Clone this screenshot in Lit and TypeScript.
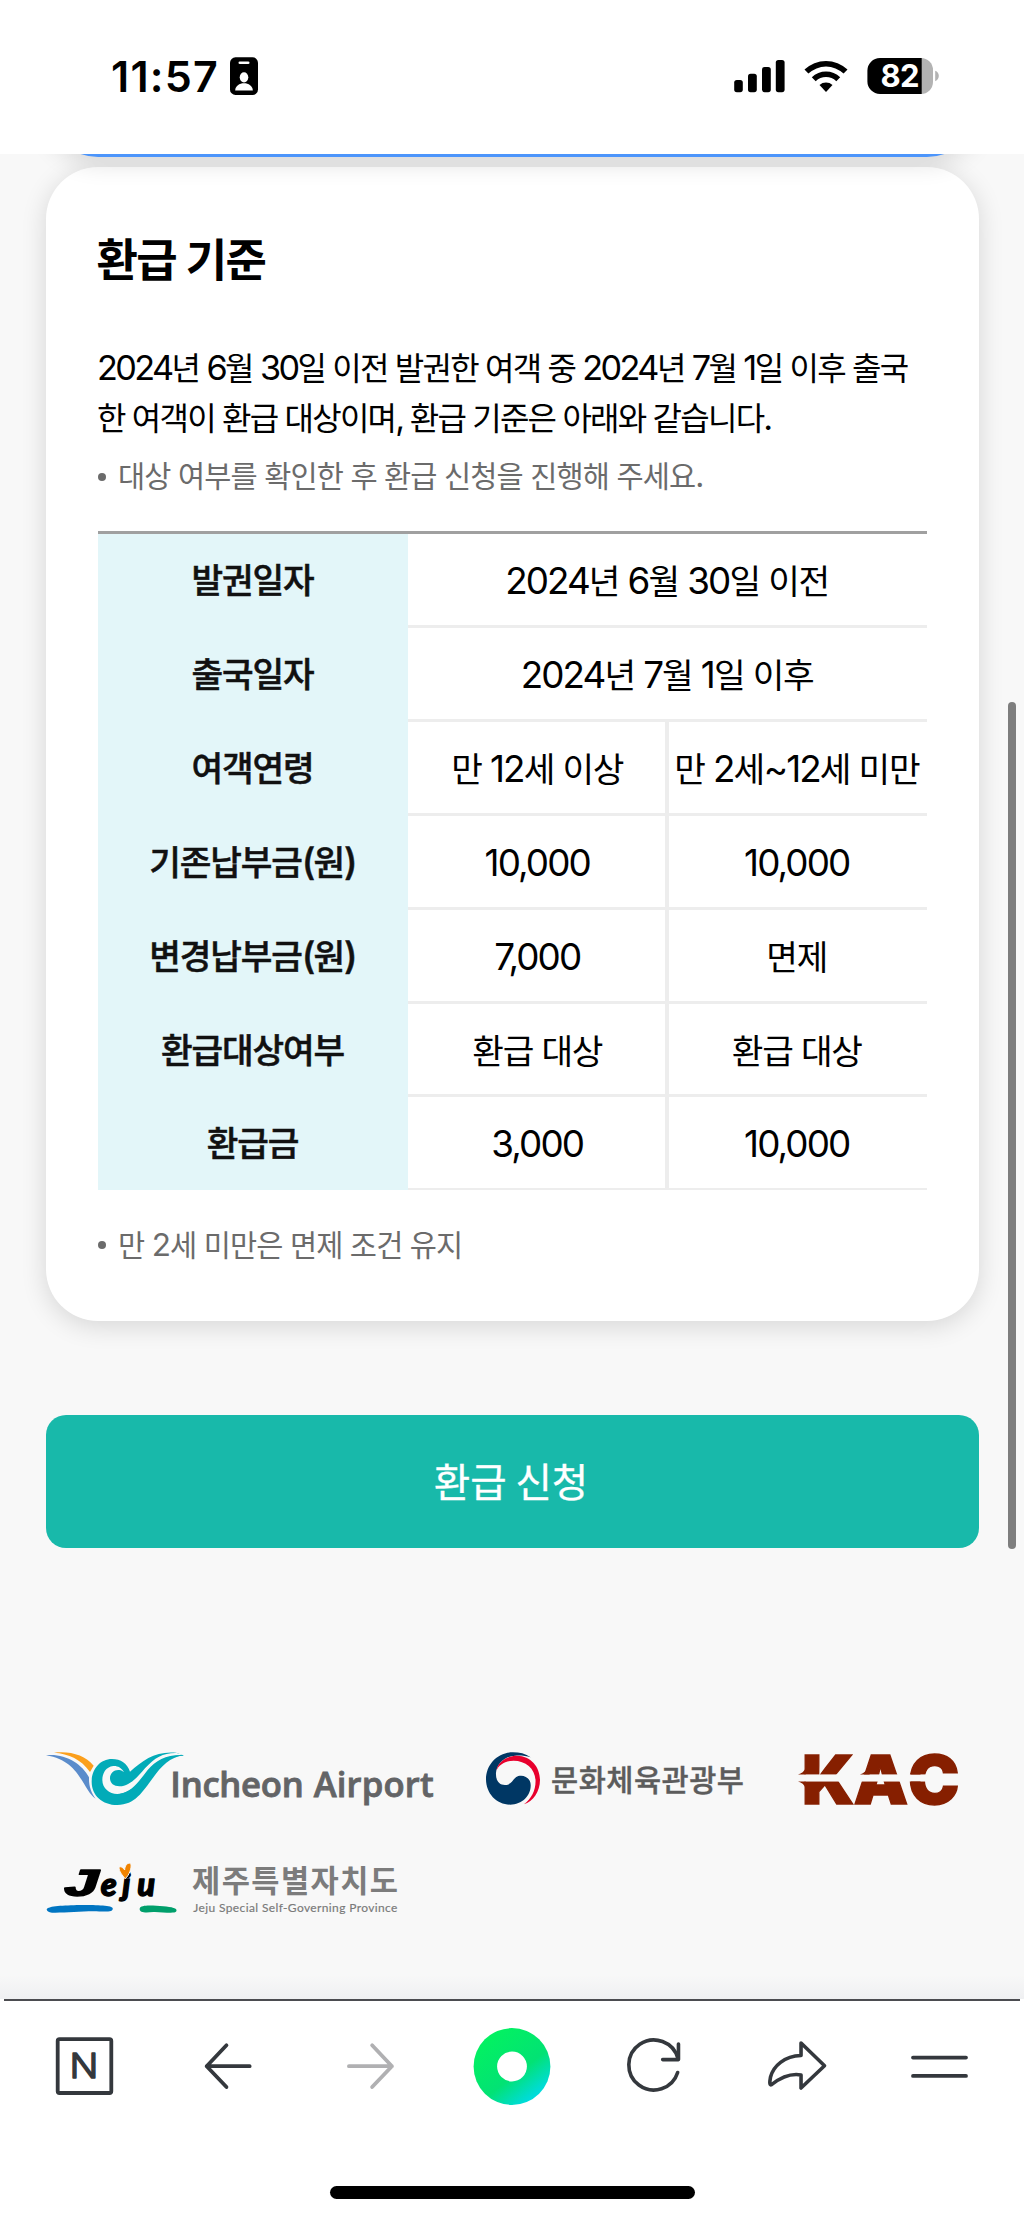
import { LitElement, html, css } from "lit";
import { customElement } from "lit/decorators.js";

/** Wraps Latin and digit runs so that they take the Latin face at its own size. */
const mix = (text: string) =>
  text
    .split(/([0-9A-Za-z,.~()]+)/)
    .filter((part) => part !== "")
    .map((part) => (/^[0-9A-Za-z,.~()]/.test(part) ? html`<span class="n">${part}</span>` : part));

interface Row {
  head: string;
  cells: string[];
}

const ROWS: Row[] = [
  { head: "발권일자", cells: ["2024년 6월 30일 이전"] },
  { head: "출국일자", cells: ["2024년 7월 1일 이후"] },
  { head: "여객연령", cells: ["만 12세 이상", "만 2세~12세 미만"] },
  { head: "기존납부금(원)", cells: ["10,000", "10,000"] },
  { head: "변경납부금(원)", cells: ["7,000", "면제"] },
  { head: "환급대상여부", cells: ["환급 대상", "환급 대상"] },
  { head: "환급금", cells: ["3,000", "10,000"] },
];

@customElement("status-bar")
class StatusBar extends LitElement {
  static styles = css`
    :host {
      display: flex;
      align-items: flex-start;
      height: 154px;
      box-sizing: border-box;
      padding: 57px 85px 0 111px;
      background: #fff;
      font-family: Inter, "Liberation Sans", sans-serif;
    }
    .time {
      width: 119px;
      font-size: 43px;
      line-height: 39px;
      font-weight: 600;
      letter-spacing: 1.2px;
      color: #000;
      white-space: nowrap;
    }
    .badge {
      width: 28px;
      height: 38px;
    }
    .right {
      margin-left: auto;
      display: flex;
      align-items: flex-start;
    }
    .signal {
      width: 51px;
      height: 38px;
      margin-right: 19px;
    }
    .wifi {
      width: 44px;
      height: 38px;
      margin-right: 19px;
    }
    .battery {
      width: 72px;
      height: 38px;
    }
  `;
  render() {
    return html`
      <div class="time">11:57</div>
      <svg class="badge" viewBox="0 0 28 38">
        <rect x="0" y="0.3" width="28" height="37.6" rx="5.5" />
        <rect x="8.5" y="4.4" width="11" height="2.6" rx="1.3" fill="#fff" />
        <ellipse cx="14" cy="20.3" rx="4.3" ry="5.1" fill="#fff" />
        <path d="M5.2 33.5C5.2 29 9.5 26.3 14 26.3S22.8 29 22.8 33.5Z" fill="#fff" />
      </svg>
      <div class="right">
        <svg class="signal" viewBox="0 0 51 38">
          <rect x="0.2" y="23" width="8.6" height="12.2" rx="2.6" />
          <rect x="14" y="16.8" width="8.8" height="18.4" rx="2.6" />
          <rect x="28" y="10" width="8.8" height="25.2" rx="2.6" />
          <rect x="41.8" y="3" width="8.8" height="32.2" rx="2.6" />
        </svg>
        <svg class="wifi" viewBox="0 0 44 38">
          <path d="M0.5 12.6A31 31 0 0 1 43.5 12.6L39.6 16.6A25.5 25.5 0 0 0 4.4 16.6Z" />
          <path d="M7.8 20.2A20.5 20.5 0 0 1 36.2 20.2L32.3 24.2A15 15 0 0 0 11.7 24.2Z" />
          <path d="M15.5 28A9.8 9.8 0 0 1 28.5 28L22 35Z" />
        </svg>
        <svg class="battery" viewBox="0 0 72 38">
          <rect x="40" y="1" width="26" height="36" rx="12" fill="#b3b3b3" />
          <path d="M54.7 1H13A12.6 12.6 0 0 0 0.4 13.6V24.4A12.6 12.6 0 0 0 13 37H54.7Z" />
          <path d="M68.2 13.8C73 15.5 73 22.5 68.2 24.2Z" fill="#b3b3b3" />
          <text x="13.5" y="30.3" font-size="31" font-weight="700" fill="#fff" textLength="39" lengthAdjust="spacing">82</text>
        </svg>
      </div>
    `;
  }
}

@customElement("refund-table")
class RefundTable extends LitElement {
  static styles = css`
    :host {
      display: block;
      border-top: 3px solid #a0a0a0;
      font-size: 34.4px;
      line-height: 50px;
      color: #000;
    }
    .row {
      display: grid;
      grid-template-columns: 310px 1fr;
      height: 93.8px;
    }
    .row.first {
      height: 94.8px;
    }
    .row.last {
      height: 92.2px;
    }
    .head,
    .cell {
      display: flex;
      align-items: center;
      justify-content: center;
      white-space: nowrap;
      box-sizing: border-box;
    }
    .head {
      background: #e3f6f9;
      color: #111;
      font-weight: 500;
      -webkit-text-stroke: 0.5px #111;
      letter-spacing: -1.15px;
      padding: 0 1px 6px 0;
    }
    .cells {
      display: grid;
      grid-template-columns: 1fr;
    }
    .cells.two {
      grid-template-columns: 257.4px 1fr;
    }
    .cell {
      border-bottom: 3.6px solid #ededed;
      padding: 0 1px 1px 0;
      letter-spacing: -1.3px;
      word-spacing: 2px;
    }
    .cells.two .cell:first-child {
      padding: 0 0 1px 1px;
    }
    .row.last .cell {
      border-bottom-width: 2px;
    }
    .cell + .cell {
      border-left: 4px solid #ededed;
      padding-right: 3px;
    }
    .n {
      font-size: 1.07em;
      line-height: 0;
      letter-spacing: -1.9px;
      font-family: Inter, "Noto Sans CJK KR", sans-serif;
    }
  `;
  render() {
    return html`${ROWS.map(
      (row, i) => html`
        <div class="row ${i === 0 ? "first" : i === ROWS.length - 1 ? "last" : ""}">
          <div class="head"><span>${mix(row.head)}</span></div>
          <div class="cells ${row.cells.length > 1 ? "two" : ""}">
            ${row.cells.map((cell) => html`<div class="cell"><span>${mix(cell)}</span></div>`)}
          </div>
        </div>
      `
    )}`;
  }
}

@customElement("partner-logos")
class PartnerLogos extends LitElement {
  static styles = css`
    :host {
      display: flex;
      flex-direction: column;
      gap: 57px;
    }
    .line {
      display: flex;
      align-items: flex-start;
    }
    .incheon {
      width: 388px;
      height: 54px;
      margin-right: 52px;
      overflow: visible;
    }
    .roundel {
      width: 54px;
      height: 53px;
      margin-right: 11px;
    }
    .ministry {
      width: 194px;
      margin-right: 53px;
      line-height: 52px;
      font-size: 29.5px;
      letter-spacing: 0.5px;
      font-weight: 500;
      -webkit-text-stroke: 0.4px #5c5c5c;
      color: #5c5c5c;
      white-space: nowrap;
    }
    .kac {
      width: 161.4px;
      height: 54px;
      overflow: visible;
    }
    .jeju {
      width: 352px;
      height: 54px;
      overflow: visible;
    }
  `;
  render() {
    return html`
      <div class="line">
        <svg class="incheon" viewBox="78 96 1164 162">
          <path
            fill="#02abb8"
            d="M468 98C405 93 370 120 330 155C322 130 302 117 276 117C240 117 215 148 215 185C215 226 247 255 292 255C345 255 368 215 398 175C425 137 450 112 490 106Z"
          />
          <path
            fill="#f8f8f8"
            d="M312 157C305 143 292 137 280 138C257 141 247 160 247 180C247 205 268 222 292 222C335 220 355 190 385 152C410 122 440 106 492 106L470 99C430 98 405 112 375 145C350 175 325 200 298 199C282 199 270 190 270 175C270 158 284 148 298 150C304 151 308 153 312 157Z"
          />
          <path fill="#02abb8" d="M490 105C440 103 408 120 383 150C355 186 335 216 300 221L330 232C365 205 385 160 412 135C440 112 462 109 490 107Z" />
          <path fill="#fb9f1c" d="M102 98C150 92 195 105 221 137L210 156C184 118 146 101 102 98Z" />
          <path
            fill="#5b8ccb"
            d="M78 106C136 100 186 132 207 172C206 198 214 220 227 236C186 208 182 122 78 106Z"
          />
          <g
            font-family="Open Sans, Noto Sans, sans-serif"
            font-size="104"
            font-weight="600"
            fill="#636466"
            stroke="#636466"
            stroke-width="2.5"
          >
            <text x="451" y="231" textLength="400" lengthAdjust="spacing">Incheon</text>
            <text x="881" y="231" textLength="360" lengthAdjust="spacing">Airport</text>
          </g>
        </svg>
        <svg class="roundel" viewBox="75 96 157 159" preserveAspectRatio="none">
          <path
            fill="#003764"
            d="M205 112C190 101 172 97 153 97C110 97 75 132 75 178C75 220 105 254 145 254C180 254 205 228 205 196C205 178 192 167 177 167C152 167 155 195 130 195C112 195 103 180 104 160C106 130 130 108 160 107C178 106 192 108 205 112Z"
          />
          <path
            fill="#e8002d"
            d="M105 152C110 124 138 107 165 107C205 108 232 140 232 180C232 215 212 245 185 253C208 235 220 210 219 180C217 145 190 122 155 122C130 122 112 135 105 152Z"
          />
        </svg>
        <div class="ministry">문화체육관광부</div>
        <svg class="kac" viewBox="982 96 469 159" preserveAspectRatio="none">
          <text
            x="994 1143 1302"
            y="249"
            font-family="Inter, sans-serif"
            font-size="200"
            font-weight="900"
            fill="#861f00"
            stroke="#861f00"
            stroke-width="4"
          >KAC</text>
          <rect x="980" y="162" width="480" height="21" fill="#f8f8f8" />
          <path
            fill="#861f00"
            d="M982 162Q998 158 1004 144V162ZM982 183Q998 187 1004 202V183ZM1162 162Q1180 156 1190 138V162ZM1308 162Q1326 156 1338 138V162ZM1308 183Q1326 190 1338 208V183Z"
          />
        </svg>
      </div>
      <div class="line">
        <svg class="jeju" viewBox="78 432 1056 162">
          <text
            transform="translate(128 530) scale(1.65 1)"
            font-family="Liberation Mono, monospace"
            font-size="118"
            font-weight="700"
            font-style="italic"
            stroke="#000"
            stroke-width="4"
            stroke-linejoin="round"
          >J</text>
          <text
            x="242 307 352"
            y="532"
            font-family="Lato, sans-serif"
            font-size="98"
            font-weight="900"
            font-style="italic"
            stroke="#000"
            stroke-width="4"
            stroke-linejoin="round"
          >eju</text>
          <path
            fill="#f08300"
            stroke="#f8f8f8"
            stroke-width="3"
            d="M316 479C307 470 297 456 297 446C300 440 309 445 314 453C314 440 322 430 332 433C337 446 327 469 316 479Z"
          />
          <path
            fill="#0075c2"
            d="M80 571C86 560 130 560 180 558C220 558 272 558 278 567C281 580 260 578 220 577C180 577 130 582 96 581C86 580 80 576 80 571Z"
          />
          <path fill="#009f6b" d="M359 569C362 556 400 560 430 562C455 564 474 568 469 577C464 586 425 578 400 579C378 581 358 582 359 569Z" />
          <text
            x="516"
            y="520"
            font-family="Noto Sans CJK KR, sans-serif"
            font-size="92"
            font-weight="700"
            fill="#7c7c7c"
            textLength="618"
            lengthAdjust="spacing"
          >제주특별자치도</text>
          <text
            x="520"
            y="579"
            font-family="Lato, sans-serif"
            font-size="36"
            font-weight="400"
            fill="#7a7a7a"
            stroke="#7a7a7a"
            stroke-width="0.5"
            textLength="612"
            lengthAdjust="spacing"
          >Jeju Special Self-Governing Province</text>
        </svg>
      </div>
    `;
  }
}

@customElement("browser-bar")
class BrowserBar extends LitElement {
  static styles = css`
    :host {
      display: flex;
      flex-direction: column;
      align-items: center;
      height: 221px;
      background: #fff;
    }
    .rule {
      width: 1016px;
      height: 2px;
      background: #4b4c50;
    }
    .tools {
      display: flex;
      justify-content: space-between;
      width: 914px;
      margin-top: 26px;
    }
    .tool {
      width: 60px;
      height: 78px;
      fill: none;
      stroke: #34383d;
      stroke-width: 3.8;
      stroke-linecap: round;
      stroke-linejoin: round;
      overflow: visible;
    }
    .off {
      stroke: #b0b0b2;
    }
    .home {
      width: 78px;
      stroke: none;
      margin: 0 -9px;
    }
    .pill {
      width: 365px;
      height: 13px;
      border-radius: 6.5px;
      background: #000;
      margin-top: 81px;
    }
  `;
  render() {
    return html`
      <div class="rule"></div>
      <div class="tools">
        <svg class="tool" viewBox="55 2027 60 78">
          <rect x="57.7" y="2039.2" width="53.6" height="53.8" rx="1.8" />
          <text
            transform="translate(69.4 2078) scale(1.12 1)"
            font-family="Inter, sans-serif"
            font-size="34"
            font-weight="300"
            fill="#34383d"
            stroke-width="1.5"
          >N</text>
        </svg>
        <svg class="tool" viewBox="197.333 2027 60 78">
          <path d="M226.8 2045.3L207 2066.2L226.8 2087M207 2066.2H250" />
        </svg>
        <svg class="tool off" viewBox="339.667 2027 60 78">
          <path d="M371.8 2045.3L391.6 2066.2L371.8 2087M391.6 2066.2H348.6" />
        </svg>
        <svg class="tool home" viewBox="473 2027 78 78">
          <defs>
            <linearGradient id="g" x1="0.15" y1="0.1" x2="0.8" y2="0.95">
              <stop offset="0" stop-color="#03f260" />
              <stop offset="0.6" stop-color="#02e274" />
              <stop offset="0.9" stop-color="#00dcd0" />
              <stop offset="1" stop-color="#00dce6" />
            </linearGradient>
          </defs>
          <circle cx="512" cy="2066.5" r="38.4" fill="url(#g)" />
          <circle cx="512" cy="2066.5" r="14.9" fill="#fff" />
        </svg>
        <svg class="tool" viewBox="624.333 2027 60 78">
          <path stroke-width="3.6" d="M678 2072.5A25 25 0 1 1 678.3 2058.5" />
          <path stroke-width="3.6" d="M678.8 2044V2059.6H663" />
        </svg>
        <svg class="tool" viewBox="766.667 2027 60 78">
          <path
            stroke-width="3.6"
            d="M800.7 2043L824.2 2065.7L800.7 2088V2075C790 2073 781 2077 771.2 2084.6C768.5 2086 769.7 2080 770.2 2077C773 2066 784 2056 800.7 2055.5Z"
          />
        </svg>
        <svg class="tool" viewBox="909 2027 60 78">
          <path d="M913 2057.6H966M913 2075.9H966" />
        </svg>
      </div>
      <div class="pill"></div>
    `;
  }
}

@customElement("app-root")
class AppRoot extends LitElement {
  static styles = css`
    :host {
      display: flex;
      flex-direction: column;
      position: relative;
      width: 1024px;
      height: 2220px;
      overflow: hidden;
      background: #fff;
      font-family: "Noto Sans CJK KR", Inter, sans-serif;
    }
    .page {
      flex: 1;
      min-height: 0;
      overflow: hidden;
      box-sizing: border-box;
      padding: 0 45px 0 46px;
      background: linear-gradient(#f8f8f8 calc(100% - 24px), #eff0f2);
    }
    .previous,
    .card {
      box-sizing: border-box;
      border-radius: 52px;
      box-shadow: 0 5px 26px rgba(0, 0, 0, 0.14);
    }
    .previous {
      position: relative;
      z-index: 1;
      height: 120px;
      margin-top: -117.5px;
      background: #4c95fb;
    }
    .card {
      height: 1154px;
      margin-top: 10.5px;
      padding: 59px 52px 0;
      background: #fff;
    }
    .title {
      margin: 0 0 0 -1.5px;
      font-size: 45px;
      line-height: 64px;
      font-weight: 700;
      letter-spacing: -1.6px;
      word-spacing: 1px;
      color: #000;
    }
    .intro {
      margin: 52px 0 0 -1px;
      font-size: 32px;
      line-height: 49.6px;
      letter-spacing: -1.76px;
      word-spacing: 1.75px;
      color: #000;
      white-space: nowrap;
    }
    .intro .n {
      letter-spacing: -2.6px;
    }
    .n {
      font-size: 1.07em;
      line-height: 0;
      font-family: Inter, "Noto Sans CJK KR", sans-serif;
    }
    .note {
      display: flex;
      align-items: center;
      gap: 12px;
      margin: 11px 0 0;
      font-size: 29.5px;
      line-height: 44px;
      letter-spacing: -0.85px;
      word-spacing: 1.6px;
      color: #6b6b6b;
      white-space: nowrap;
    }
    .note::before {
      content: "";
      width: 8px;
      height: 8px;
      margin-top: 5px;
      border-radius: 50%;
      background: #6b6b6b;
    }
    .table {
      margin-top: 34.5px;
    }
    .after {
      margin-top: 31px;
    }
    .apply {
      display: flex;
      align-items: center;
      justify-content: center;
      width: 100%;
      height: 133px;
      margin: 94px 0 0;
      padding: 0 3px 5px 0;
      border: 0;
      border-radius: 20px;
      background: #18b9aa;
      color: #fff;
      font: 400 39.6px "Noto Sans CJK KR", sans-serif;
      -webkit-text-stroke: 0.3px #fff;
    }
    .logos {
      margin-top: 204px;
      margin-right: -20px;
    }
    .scroll {
      position: absolute;
      left: 1008px;
      top: 702px;
      width: 8px;
      height: 847px;
      border-radius: 4px;
      background: #7e7e7e;
    }
  `;
  render() {
    return html`
      <status-bar></status-bar>
      <main class="page">
        <div class="previous"></div>
        <section class="card">
          <h2 class="title">환급 기준</h2>
          <p class="intro">
            ${mix("2024년 6월 30일 이전 발권한 여객 중 2024년 7월 1일 이후 출국")}<br />${mix(
              "한 여객이 환급 대상이며, 환급 기준은 아래와 같습니다."
            )}
          </p>
          <p class="note"><span>${mix("대상 여부를 확인한 후 환급 신청을 진행해 주세요.")}</span></p>
          <refund-table class="table"></refund-table>
          <p class="note after"><span>${mix("만 2세 미만은 면제 조건 유지")}</span></p>
        </section>
        <button class="apply">환급 신청</button>
        <partner-logos class="logos"></partner-logos>
      </main>
      <browser-bar></browser-bar>
      <div class="scroll"></div>
    `;
  }
}
